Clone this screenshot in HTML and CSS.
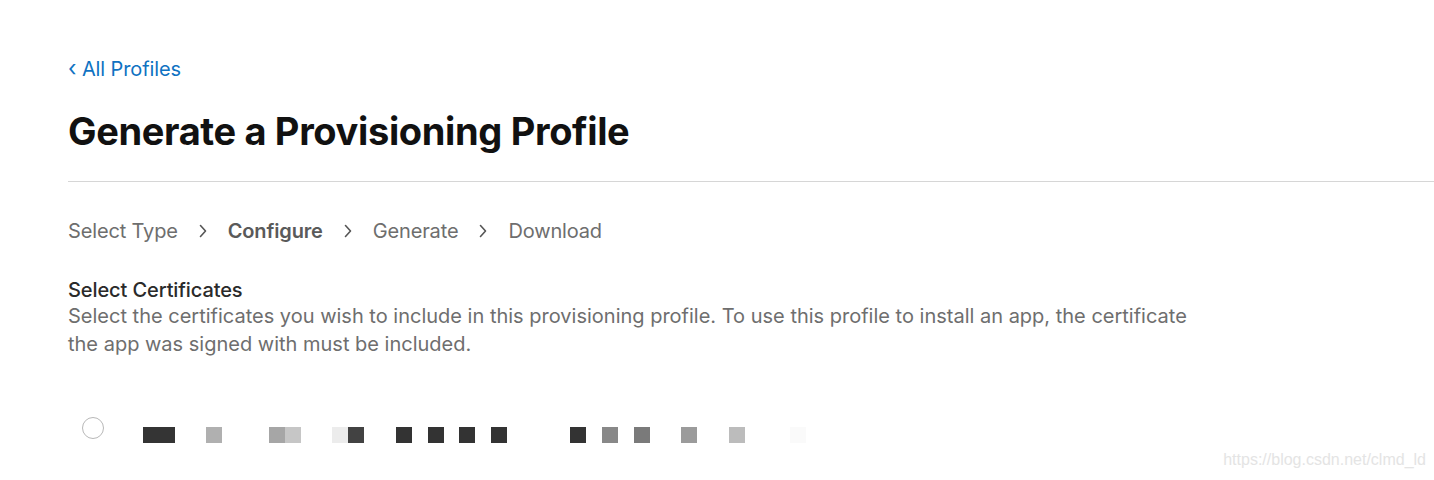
FILE: index.html
```html
<!DOCTYPE html>
<html>
<head>
<meta charset="utf-8">
<link rel="stylesheet" href="styles.css">
</head>
<body>
<div class="page">
  <a class="back" href="#"><span class="back-chev">‹</span> All Profiles</a>
  <h1 class="title">Generate a Provisioning Profile</h1>
  <div class="rule"></div>
  <nav class="steps">
    <span class="step">Select Type</span>
    <svg class="chev" viewBox="0 0 8 14" width="8" height="14"><path d="M1.5 1.5 L6.5 7 L1.5 12.5" fill="none" stroke="#555" stroke-width="1.6" stroke-linecap="round" stroke-linejoin="round"/></svg>
    <span class="step current">Configure</span>
    <svg class="chev" viewBox="0 0 8 14" width="8" height="14"><path d="M1.5 1.5 L6.5 7 L1.5 12.5" fill="none" stroke="#555" stroke-width="1.6" stroke-linecap="round" stroke-linejoin="round"/></svg>
    <span class="step">Generate</span>
    <svg class="chev" viewBox="0 0 8 14" width="8" height="14"><path d="M1.5 1.5 L6.5 7 L1.5 12.5" fill="none" stroke="#555" stroke-width="1.6" stroke-linecap="round" stroke-linejoin="round"/></svg>
    <span class="step">Download</span>
  </nav>
  <section class="certs">
    <h2 class="certs-title">Select Certificates</h2>
    <p class="certs-desc">Select the certificates you wish to include in this provisioning profile. To use this profile to install an app, the certificate the app was signed with must be included.</p>
    <div class="cert-row">
      <span class="radio"></span>
      <div class="mosaic">
        <span class="px" style="left:143px;width:32px;background:#343434"></span>
        <span class="px" style="left:206px;background:#b0b0b0"></span>
        <span class="px" style="left:269px;background:#a6a6a6"></span>
        <span class="px" style="left:285px;background:#c6c6c6"></span>
        <span class="px" style="left:332px;background:#ececec"></span>
        <span class="px" style="left:348px;background:#424242"></span>
        <span class="px" style="left:396px;background:#333333"></span>
        <span class="px" style="left:428px;background:#333333"></span>
        <span class="px" style="left:459px;background:#333333"></span>
        <span class="px" style="left:491px;background:#333333"></span>
        <span class="px" style="left:570px;background:#333333"></span>
        <span class="px" style="left:602px;background:#888888"></span>
        <span class="px" style="left:634px;background:#7a7a7a"></span>
        <span class="px" style="left:681px;background:#9b9b9b"></span>
        <span class="px" style="left:729px;background:#bcbcbc"></span>
        <span class="px" style="left:790px;background:#fafafa"></span>
      </div>
    </div>
  </section>
  <div class="watermark">https://blog.csdn.net/clmd_ld</div>
</div>
</body>
</html>
```

FILE: styles.css
```css
html, body {
  margin: 0;
  padding: 0;
  background: #ffffff;
}

body {
  font-family: Inter, "Noto Sans", "Liberation Sans", sans-serif;
  color: #1d1d1f;
  width: 1434px;
  height: 480px;
  overflow: hidden;
}

.page {
  position: relative;
  padding: 55px 0 0 68px;
  height: 480px;
  box-sizing: border-box;
}

.back {
  display: block;
  color: #0f72c2;
  text-decoration: none;
  font-size: 20px;
  line-height: 26px;
  letter-spacing: -0.1px;
}

.back-chev {
  font-size: 22px;
}

.title {
  margin: 27px 0 0 0;
  font-size: 38px;
  line-height: 44px;
  font-weight: 700;
  letter-spacing: -0.35px;
  color: #111111;
}

.rule {
  margin-top: 28px;
  height: 1px;
  background: #d6d6d6;
}

.steps {
  display: flex;
  align-items: center;
  margin-top: 36px;
  height: 26px;
  font-size: 20px;
  color: #6e6e6e;
  letter-spacing: -0.15px;
}

.step.current {
  font-weight: 600;
  color: #5a5a5a;
}

.chev {
  margin: 0 21px 0 21px;
}

.certs {
  margin-top: 33px;
}

.certs-title {
  margin: 0;
  font-size: 20px;
  font-weight: 500;
  line-height: 26px;
  color: #2a2a2a;
  letter-spacing: -0.1px;
}

.certs-desc {
  margin: -1px 0 0 0;
  width: 1140px;
  font-size: 20px;
  line-height: 28px;
  color: #6e6e6e;
  letter-spacing: 0;
}

.cert-row {
  position: relative;
  margin-top: 57px;
  height: 40px;
}

.radio {
  position: absolute;
  left: 14px;
  top: 2px;
  width: 20px;
  height: 20px;
  border: 1px solid #b8b8b8;
  border-radius: 50%;
}

.mosaic {
  position: absolute;
  left: -68px;
  top: 12px;
}

.px {
  position: absolute;
  top: 0;
  width: 16px;
  height: 16px;
}

.watermark {
  position: absolute;
  right: 8px;
  top: 451px;
  font-family: "Liberation Sans", Arial, sans-serif;
  font-size: 16px;
  color: #e4e4e4;
}
```
